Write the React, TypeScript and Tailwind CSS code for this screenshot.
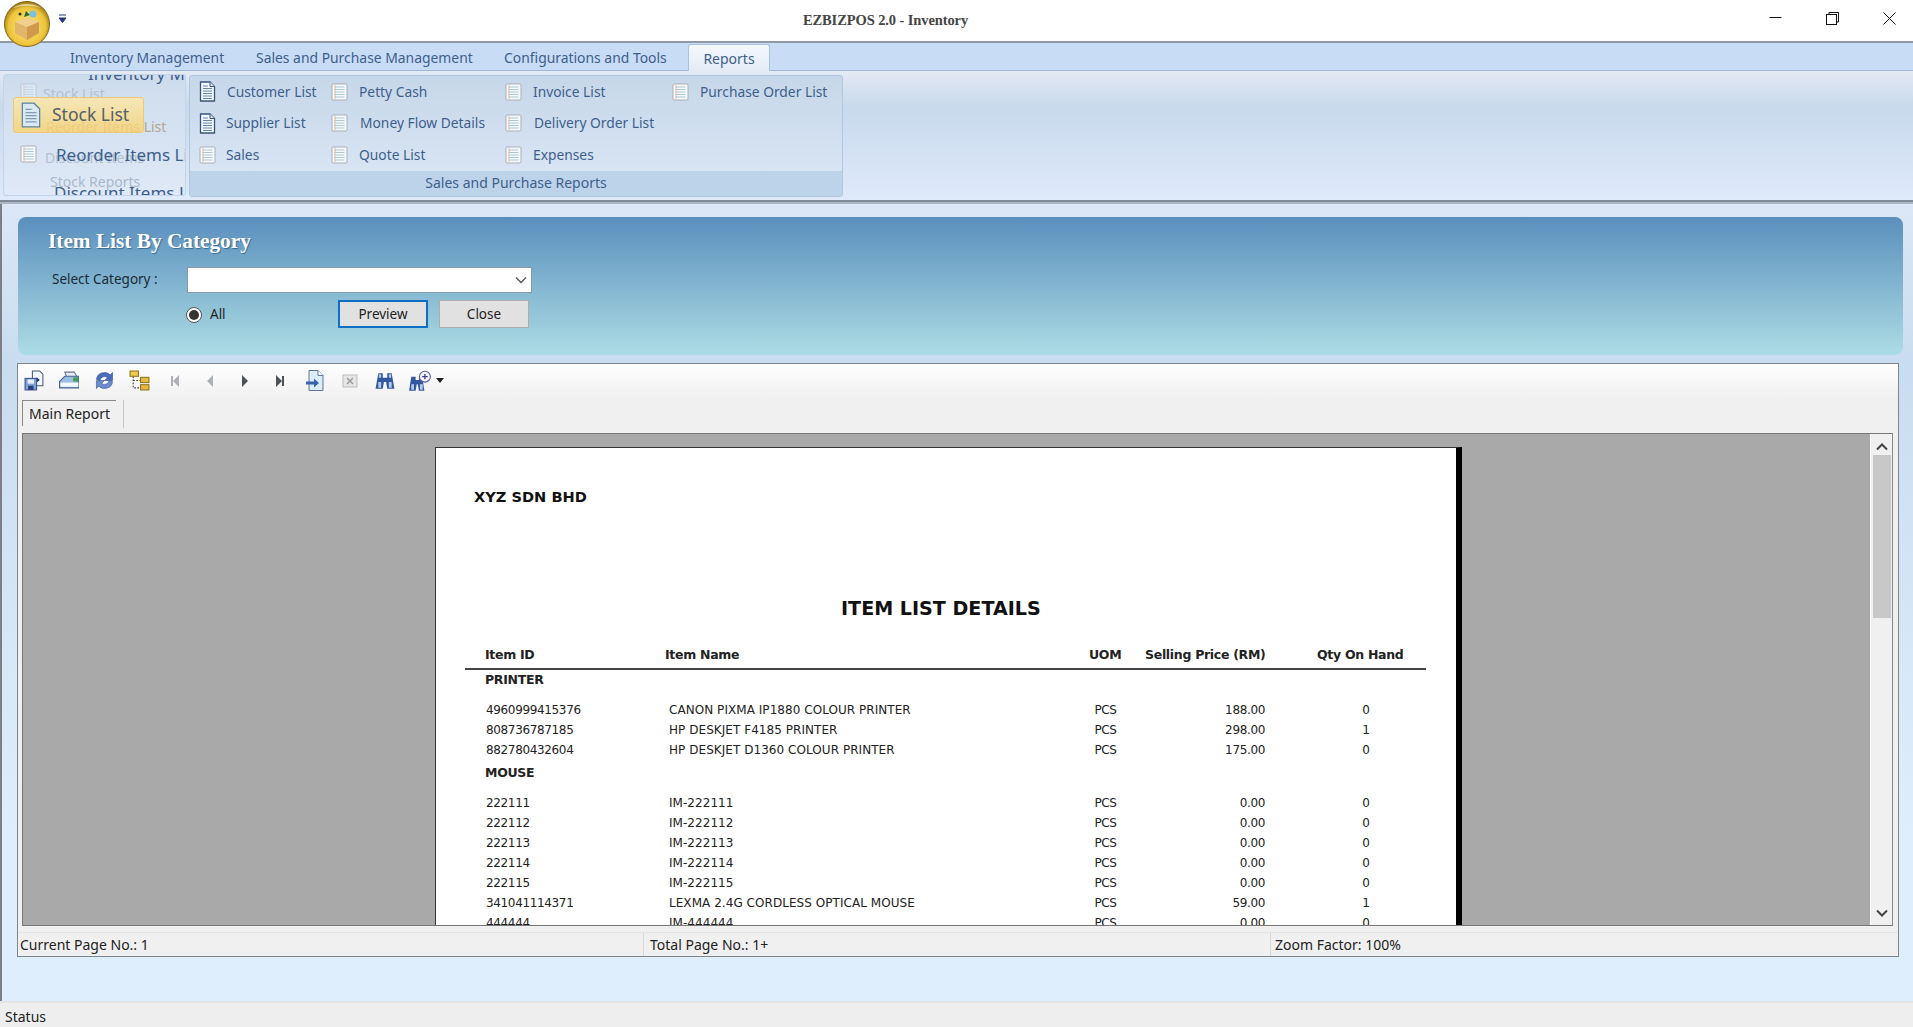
import React from "react";

const ui = "font-['Noto_Sans','Open_Sans',sans-serif]";

function DocIcon() {
  return (
    <svg width="17" height="21" viewBox="0 0 17 21" className="shrink-0">
      <path d="M1.5 1h9.5l4.5 4.5V20H1.5z" fill="#f7fbff" stroke="#35557f" strokeWidth="1.3" />
      <path d="M11 1v4.5h4.5" fill="#dbe6f2" stroke="#35557f" />
      <path d="M4 5h5M4 7.5h9M4 10h9M4 12.500h9M4 15h9M4 17.500h9" stroke="#5f86ad" strokeWidth="1" />
    </svg>
  );
}

function LedgerIcon() {
  return (
    <svg width="17" height="18" viewBox="0 0 17 18" className="shrink-0">
      <rect x="1" y="1" width="15" height="16" rx="1" fill="#f7fafc" stroke="#a9afb6" />
      <path d="M3.500 4h10M3.500 6.500h10M3.500 9h10M3.500 11.500h10M3.500 14h10" stroke="#a9c7d4" strokeWidth="1" />
      <path d="M4 2v14" stroke="#e4b8a4" strokeWidth="1" />
    </svg>
  );
}

function Logo() {
  return (
    <svg width="46" height="46" viewBox="0 0 46 46">
      <defs>
        <radialGradient id="gold" cx="50%" cy="55%" r="55%">
          <stop offset="0%" stopColor="#fbe98a" />
          <stop offset="75%" stopColor="#eec53a" />
          <stop offset="100%" stopColor="#94720f" />
        </radialGradient>
      </defs>
      <circle cx="23" cy="23" r="22.5" fill="url(#gold)" stroke="#85691a" />
      <path d="M11 21l12-4 12 4v11l-12 7-12-7z" fill="#e2b66a" />
      <path d="M11 21l12 5 12-5-12-4z" fill="#f1d08e" />
      <path d="M23 26v13l12-7V21z" fill="#cf9a4c" />
      <path d="M20 16l2-6 4 4z" fill="#2e6b2e" />
      <circle cx="29" cy="13" r="3.5" fill="#7cc0e0" />
      <circle cx="16" cy="13" r="1.5" fill="#333" />
      <path d="M9 7a20 14 0 0 1 28 0a24 12 0 0 0-28 0z" fill="#fff" opacity="0.55" />
    </svg>
  );
}

const ToolIcons = {
  save: (
    <svg width="21" height="21" viewBox="0 0 20 20">
      <path d="M8 1h7l3 3v11H8z" fill="#f2f6fb" stroke="#47597a" />
      <path d="M12 7l3 2.5-3 2.500z" fill="#1c2c4c" />
      <rect x="1" y="8" width="11" height="11" fill="#7d9fd8" stroke="#3a5590" />
      <rect x="3.5" y="9" width="6" height="4" fill="#e9eef8" />
      <rect x="4" y="15" width="5" height="4" fill="#2c4070" />
    </svg>
  ),
  print: (
    <svg width="24" height="21" viewBox="0 0 22 20">
      <path d="M7 2h9l3 5H9z" fill="#e8edf4" stroke="#6b7688" />
      <path d="M4 9l3-3h13v11H2v-6z" fill="#9dbde3" stroke="#47648f" />
      <rect x="3" y="12" width="17" height="4" fill="#f4f7fb" />
      <rect x="15" y="7" width="5" height="4" fill="#3f9f56" />
    </svg>
  ),
  refresh: (
    <svg width="23" height="23" viewBox="0 0 20 20">
      <path d="M3 9a7 6.5 0 0 1 12-4l2-2v7h-7l2.5-2.500A4 4 0 0 0 6 10z" fill="#4a6cbd" stroke="#31518f" strokeWidth="0.5" />
      <path d="M17 11a7 6.5 0 0 1-12 4l-2 2v-7h7l-2.500 2.500A4 4 0 0 0 14 10z" fill="#6b8bce" stroke="#31518f" strokeWidth="0.5" />
    </svg>
  ),
  tree: (
    <svg width="21" height="21" viewBox="0 0 20 20">
      <path d="M4 6v11h7M4 10h7" stroke="#333" strokeDasharray="1.5 1.5" fill="none" />
      <rect x="1" y="1" width="8" height="5" fill="#f2c94c" stroke="#8f7420" />
      <rect x="11" y="7" width="8" height="5" fill="#e7b93c" stroke="#8f7420" />
      <rect x="11" y="14" width="8" height="5" fill="#e7b93c" stroke="#8f7420" />
    </svg>
  ),
  first: (
    <svg width="12" height="14" viewBox="0 0 12 14"><path d="M2 2h2v10H2zM10 1v12L4 7z" fill="#adb1b5" /></svg>
  ),
  prev: (
    <svg width="12" height="14" viewBox="0 0 12 14"><path d="M9 1v12L3 7z" fill="#adb1b5" /></svg>
  ),
  next: (
    <svg width="12" height="14" viewBox="0 0 12 14"><path d="M3 1v12l6-6z" fill="#4d5256" /></svg>
  ),
  last: (
    <svg width="12" height="14" viewBox="0 0 12 14"><path d="M2 1v12l6-6zM8 2h2v10H8z" fill="#4d5256" /></svg>
  ),
  goto: (
    <svg width="20" height="23" viewBox="0 0 20 22">
      <path d="M4 1h9l5 5v15H4z" fill="#dcecf9" stroke="#5f7793" />
      <path d="M13 1v5h5" fill="#fff" stroke="#5f7793" />
      <path d="M1 12h8V9l5 4.500L9 18v-3H1z" fill="#3a63ad" />
    </svg>
  ),
  stop: (
    <svg width="16" height="16" viewBox="0 0 16 16">
      <rect x="1" y="2" width="14" height="12" fill="#e6e6e6" stroke="#bcbcbc" />
      <path d="M5 5l6 6M11 5l-6 6" stroke="#9a9a9a" strokeWidth="1.5" />
    </svg>
  ),
  find: (
    <svg width="20" height="20" viewBox="0 0 18 18">
      <path d="M3 2h4v4h4V2h4l2.500 14h-6.500l-1-6H8l-1 6H.500z" fill="#34589f" />
      <path d="M3 10h2.500v5H3zM12.500 10H15v5h-2.500zM3.500 3h2v3h-2zM12.500 3h2v3h-2z" fill="#b4cdee" />
    </svg>
  ),
  zoom: (
    <svg width="24" height="22" viewBox="0 0 22 20">
      <path d="M3 6h4v3h3V6h3l2 13h-5l-1-6H8l-1 6H1z" fill="#34589f" />
      <path d="M3 13h2.500v5H3zM11 13h2.500v5H11z" fill="#b4cdee" />
      <circle cx="15.5" cy="6" r="5" fill="#f4f4fa" stroke="#5b5ba8" />
      <path d="M13 6h5M15.500 3.500v5" stroke="#3d3d90" strokeWidth="1.2" />
    </svg>
  ),
};

const toolbar: [keyof typeof ToolIcons, string][] = [
  ["save", "w-[33px]"],
  ["print", "w-[36px]"],
  ["refresh", "w-[35px]"],
  ["tree", "w-[35px]"],
  ["first", "w-[35px]"],
  ["prev", "w-[35px]"],
  ["next", "w-[35px]"],
  ["last", "w-[35px]"],
  ["goto", "w-[35px]"],
  ["stop", "w-[35px]"],
  ["find", "w-[36px]"],
  ["zoom", "w-[33px]"],
];

const groupTextCls = `${ui} text-[13.8px] leading-none text-[#3e5f8c] whitespace-nowrap`;
const tabCls = "mb-[3px] whitespace-nowrap text-[13.9px] leading-[18px] text-[#3e5f8c]";

function RibbonItem({ doc, label, gap = "ml-[11px]" }: { doc?: boolean; label: string; gap?: string }) {
  return (
    <div className="flex h-[31.5px] items-center">
      {doc ? <DocIcon /> : <LedgerIcon />}
      <span className={`${groupTextCls} ${gap}`}>{label}</span>
    </div>
  );
}

function Row({ id, name, price, qty }: { id: string; name: string; price: string; qty: string }) {
  return (
    <div className="flex h-[20px] items-center text-[12px] leading-none tracking-[-0.35px] text-[#222] whitespace-nowrap">
      <span className="w-[184px] shrink-0 pl-[1px]">{id}</span>
      <span className="w-[419px] shrink-0 tracking-[0.05px]">{name}</span>
      <span className="w-[35px] shrink-0 text-center">PCS</span>
      <span className="w-[142px] shrink-0 text-right">{price}</span>
      <span className="w-[202px] shrink-0 text-center">{qty}</span>
    </div>
  );
}

function Paper() {
  return (
    <div className="h-[478px] w-[1027px] shrink-0 overflow-hidden border-l border-t border-[#333] bg-white border-r-[6px] border-r-black font-['DejaVu_Sans',sans-serif]">
      <div className="pt-[39px] pl-[38px] text-[14.6px] font-bold leading-[20px] text-[#111]">XYZ SDN BHD</div>
      <div className="mt-[90px] pl-[405px] text-[19.1px] font-bold leading-[24px] text-[#111]">ITEM LIST DETAILS</div>
      <div className="mt-[24px] ml-[29px] w-[961px] border-b-2 border-[#444] pb-[3px]">
        <div className="flex h-[20px] items-center pl-[20px] text-[12.5px] font-bold leading-none tracking-[-0.3px] text-[#222] whitespace-nowrap">
          <span className="w-[180px] shrink-0">Item ID</span>
          <span className="w-[424px] shrink-0">Item Name</span>
          <span className="w-[56px] shrink-0">UOM</span>
          <span className="w-[172px] shrink-0">Selling Price (RM)</span>
          <span className="shrink-0">Qty On Hand</span>
        </div>
      </div>
      <div className="pl-[49px]">
        <div className="flex h-[21px] items-center text-[12.5px] font-bold leading-none tracking-[-0.3px] text-[#222]">PRINTER</div>
        <div className="mt-[9px]">
          <Row id="4960999415376" name="CANON PIXMA IP1880 COLOUR PRINTER" price="188.00" qty="0" />
          <Row id="808736787185" name="HP DESKJET F4185 PRINTER" price="298.00" qty="1" />
          <Row id="882780432604" name="HP DESKJET D1360 COLOUR PRINTER" price="175.00" qty="0" />
        </div>
        <div className="flex h-[26px] items-center text-[12.5px] font-bold leading-none tracking-[-0.3px] text-[#222]">MOUSE</div>
        <div className="mt-[7px]">
          <Row id="222111" name="IM-222111" price="0.00" qty="0" />
          <Row id="222112" name="IM-222112" price="0.00" qty="0" />
          <Row id="222113" name="IM-222113" price="0.00" qty="0" />
          <Row id="222114" name="IM-222114" price="0.00" qty="0" />
          <Row id="222115" name="IM-222115" price="0.00" qty="0" />
          <Row id="341041114371" name="LEXMA 2.4G CORDLESS OPTICAL MOUSE" price="59.00" qty="1" />
          <Row id="444444" name="IM-444444" price="0.00" qty="0" />
        </div>
      </div>
    </div>
  );
}

export default function App() {
  return (
    <div className={`relative flex h-[1027px] w-[1913px] flex-col overflow-hidden bg-white ${ui}`}>
      {/* title bar */}
      <div className="relative flex h-[41px] shrink-0 items-center justify-center bg-white">
        <span className="ml-[-142px] font-['Liberation_Serif',serif] text-[14.5px] font-bold tracking-[-0.1px] text-[#444] whitespace-nowrap">
          EZBIZPOS 2.0 - Inventory
        </span>
        <div className="absolute right-[17px] top-[12px] flex items-start gap-[44px]">
          <svg width="13" height="13" viewBox="0 0 13 13"><path d="M0.5 5.5h12" stroke="#111" /></svg>
          <svg width="13" height="13" viewBox="0 0 13 13" fill="none" stroke="#111"><rect x="0.5" y="2.5" width="10" height="10" /><path d="M3 2.5v-2h9.5v9.5h-2" /></svg>
          <svg width="13" height="13" viewBox="0 0 13 13"><path d="M0.5 0.5l12 12M12.5 0.5l-12 12" stroke="#111" /></svg>
        </div>
      </div>
      <div className="absolute left-[4px] top-[1px] z-20"><Logo /></div>
      <svg width="9" height="10" viewBox="0 0 9 10" className="absolute left-[58px] top-[14px]">
        <path d="M1 1h7M1 4h7l-3.5 4.5z" stroke="#23397a" fill="#23397a" strokeWidth="1" />
      </svg>

      {/* tab strip */}
      <div className="flex h-[30px] shrink-0 items-end border-t-2 border-b border-t-[#8f99a5] border-b-[#9db8dc] bg-[#c8dcf6] pl-[70px]">
        <span className={`w-[186px] ${tabCls}`}>Inventory Management</span>
        <span className={`w-[248px] ${tabCls}`}>Sales and Purchase Management</span>
        <span className={`w-[184px] ${tabCls}`}>Configurations and Tools</span>
        <span className="mb-[-1px] flex h-[27px] w-[82px] items-center justify-center rounded-t-[3px] border border-b-0 border-[#a9c2e0] bg-gradient-to-b from-[#f4f8fd] to-[#e3ebf5] text-[14px] text-[#3e5f8c]">Reports</span>
      </div>

      {/* ribbon */}
      <div className="relative flex h-[129px] shrink-0 bg-[linear-gradient(#e3eaf4,#c8d9ec_28%,#dfeafa)] pl-[189px] pt-[4px]">
        <div className="absolute left-[3px] top-[3px] h-[122px] w-[183px] overflow-hidden rounded-[3px] border border-[#c2d5ea] bg-gradient-to-b from-[#cddcec] to-[#dfe9f7]">
          <span className="absolute left-[84px] top-[-14px] whitespace-nowrap text-[17px] text-[#3e5f8c]">Inventory M</span>
          <span className="absolute left-[39px] top-[8px] whitespace-nowrap text-[14px] text-[#b3c0cf]">Stock List</span>
          <div className="absolute left-[16px] top-[8px] opacity-40"><LedgerIcon /></div>
          <span className="absolute left-[42px] top-[41px] whitespace-nowrap text-[14px] text-[#b3a890]">Reorder Items List</span>
          <span className="absolute left-[41px] top-[72px] whitespace-nowrap text-[14px] text-[#b3c0cf]">Discount Items</span>
          <span className="absolute left-[46px] top-[96px] whitespace-nowrap text-[14px] text-[#a9b8ca]">Stock Reports</span>
          <div className="absolute left-[9px] top-[22px] flex h-[36px] w-[131px] items-center rounded-[3px] border border-[#eec877] bg-gradient-to-b from-[#fde9a9cc] to-[#f9d26dcc] pl-[6px]">
            <svg width="22" height="26" viewBox="0 0 17 21"><path d="M1.5 1h9.5l4.5 4.5V20H1.5z" fill="#dbe8f0" stroke="#5b83a0" /><path d="M4 6h5M4 8.5h9M4 11h9M4 13.5h9M4 16h9" stroke="#7b9db8" /></svg>
            <span className="ml-[10px] whitespace-nowrap text-[17.5px] leading-none text-[#54606b]">Stock List</span>
          </div>
          <div className="absolute left-[16px] top-[70px]"><LedgerIcon /></div>
          <span className="absolute left-[52px] top-[67px] whitespace-nowrap text-[17px] text-[#3e5f8c]">Reorder Items List</span>
          <span className="absolute left-[50px] top-[105px] whitespace-nowrap text-[17px] text-[#3e5f8c]">Discount Items List</span>
        </div>

        <div className="flex h-[122px] w-[654px] flex-col overflow-hidden rounded-[3px] border border-[#b0c6de] bg-gradient-to-b from-[#c6d7e9] to-[#dde8f6]">
          <div className="flex flex-1 pl-[9px]">
            <div className="w-[132px]">
              <RibbonItem doc label="Customer List" />
              <RibbonItem doc label="Supplier List" gap="ml-[10px]" />
              <RibbonItem label="Sales" gap="ml-[10px]" />
            </div>
            <div className="w-[174px]">
              <RibbonItem label="Petty Cash" />
              <RibbonItem label="Money Flow Details" gap="ml-[12px]" />
              <RibbonItem label="Quote List" />
            </div>
            <div className="w-[167px]">
              <RibbonItem label="Invoice List" />
              <RibbonItem label="Delivery Order List" gap="ml-[12px]" />
              <RibbonItem label="Expenses" />
            </div>
            <div>
              <RibbonItem label="Purchase Order List" />
            </div>
          </div>
          <div className="flex h-[25px] shrink-0 items-center justify-center bg-[#bdd3ea] pb-[2px] text-[14px] leading-none text-[#3e5f8c]">
            Sales and Purchase Reports
          </div>
        </div>
      </div>
      <div className="h-[4px] shrink-0 border-t-2 border-[#7f8a96] bg-[#aab6c4]" />

      {/* main area */}
      <div className="flex min-h-0 flex-1 flex-col border-l-2 border-[#7c7f85] bg-[linear-gradient(#dbe7f6,#c9ddf0_20%,#dfeefc_80%)] pl-[16px] pt-[13px]">
        <div className="flex h-[138px] w-[1885px] shrink-0 flex-col rounded-[8px] bg-[linear-gradient(#5a8fbd,#acdce4)] pl-[30px]">
          <div className="mt-[11px] font-['Liberation_Serif',serif] text-[21.3px] font-bold leading-[26px] text-white [text-shadow:1px_1px_1px_#3a6a92]">
            Item List By Category
          </div>
          <div className="mt-[13px] flex h-[26px] items-center">
            <span className="w-[139px] pl-[4px] text-[13.5px] leading-none text-[#1a2a38]">Select Category :</span>
            <div className="flex h-[26px] w-[345px] items-center justify-end border border-[#8a9aa8] bg-white pr-[4px]">
              <svg width="12" height="8" viewBox="0 0 12 8" fill="none" stroke="#555" strokeWidth="1.3"><path d="M1 1.5l5 5 5-5" /></svg>
            </div>
          </div>
          <div className="mt-[7px] flex h-[28px] items-center">
            <div className="ml-[138px] flex w-[152px] items-center pt-[1px]">
              <span className="flex h-[16px] w-[16px] items-center justify-center rounded-full border border-[#555] bg-white">
                <span className="h-[10px] w-[10px] rounded-full bg-[#333]" />
              </span>
              <span className="ml-[8px] text-[13.5px] leading-none text-[#222]">All</span>
            </div>
            <button className="flex h-[28px] w-[90px] items-center justify-center border-2 border-[#0f6fc4] bg-[#e1e1e1] pt-[1px] text-[13.5px] text-[#222]">Preview</button>
            <button className="ml-[11px] flex h-[28px] w-[90px] items-center justify-center border border-[#adadad] bg-[#e1e1e1] pt-[1px] text-[13.5px] text-[#222]">Close</button>
          </div>
        </div>

        {/* report viewer */}
        <div className="mt-[8px] ml-[-1px] flex h-[594px] w-[1882px] shrink-0 flex-col border border-[#7d858d] bg-[#f0f0f0] pl-[4px] pr-[5px]">
          <div className="ml-[-4px] mr-[-5px] flex h-[36px] shrink-0 items-center bg-[linear-gradient(#fefefe,#f0f0f0)] pb-[3px]">
            {toolbar.map(([name, w]) => (
              <span key={name} className={`flex justify-center ${w}`}>{ToolIcons[name]}</span>
            ))}
            <svg width="8" height="5" viewBox="0 0 8 5"><path d="M0 0h8L4 5z" fill="#222" /></svg>
          </div>
          <div className="flex h-[33px] shrink-0 items-start">
            <span className="flex h-[26px] w-[94px] items-center justify-center border-l border-t border-[#8a8a8a] text-[14px] leading-none text-[#222]">Main Report</span>
            <span className="ml-[7px] h-[28px] w-px bg-[#c4c4c4]" />
          </div>
          <div className="flex h-[493px] shrink-0 border-t border-l border-b border-[#777] border-r border-r-[#888]">
            <div className="flex flex-1 justify-start overflow-hidden bg-[#a9a9a9] pl-[412px] pt-[13px]">
              <Paper />
            </div>
            <div className="flex w-[22px] shrink-0 flex-col items-center border-l border-white bg-[#f0f0f0]">
              <svg width="12" height="8" viewBox="0 0 12 8" fill="none" stroke="#444" strokeWidth="2" className="mt-[9px]"><path d="M1 6.5l5-5 5 5" /></svg>
              <div className="mt-[4px] h-[163px] w-[18px] bg-[#c8c8c8]" />
              <svg width="12" height="8" viewBox="0 0 12 8" fill="none" stroke="#444" strokeWidth="2" className="mt-[291px]"><path d="M1 1.5l5 5 5-5" /></svg>
            </div>
          </div>
          <div className="ml-[-4px] mr-[-5px] mt-[6px] flex min-h-0 flex-1 items-center border-t border-[#e4e4e4] text-[14px] leading-none text-[#222]">
            <span className="flex h-full w-[626px] items-center whitespace-nowrap border-r border-[#d8d8d8] pl-[2px]">Current Page No.: 1</span>
            <span className="flex h-full w-[627px] items-center whitespace-nowrap border-r border-[#d8d8d8] pl-[6px]">Total Page No.: 1+</span>
            <span className="whitespace-nowrap pl-[4px]">Zoom Factor: 100%</span>
          </div>
        </div>
      </div>

      {/* status bar */}
      <div className="flex h-[26px] shrink-0 items-center border-t-2 border-[#e4e4e4] bg-[#eeeeee] pl-[5px] pt-[3px] text-[14px] leading-none text-[#222]">
        Status
      </div>
    </div>
  );
}
